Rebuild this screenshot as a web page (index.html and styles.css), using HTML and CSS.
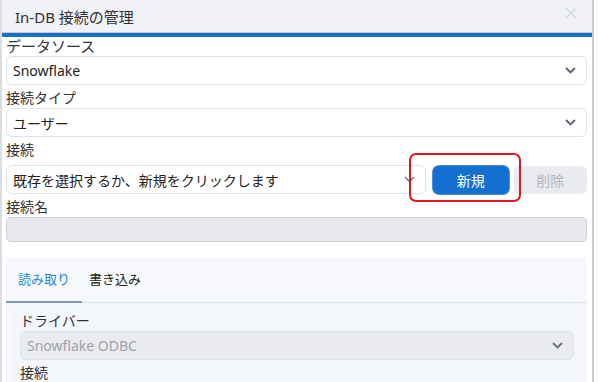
FILE: index.html
```html
<!DOCTYPE html>
<html lang="ja">
<head>
    <meta charset="UTF-8">
    <title>In-DB 接続の管理</title>
    <link rel="stylesheet" href="styles.css">
</head>
<body>
    <div class="dialog">
        <div class="titlebar">
            <span class="title">In-DB 接続の管理</span>
            <svg class="close" width="12" height="12" viewBox="0 0 12 12"><path d="M1 1L11 11M11 1L1 11" stroke="#d3d7e0" stroke-width="1.4" fill="none"/></svg>
        </div>
        <div class="accent"></div>
        <div class="body">
            <div class="field-label first">データソース</div>
            <div class="select">
                <span>Snowflake</span>
                <svg class="chev" width="11" height="7" viewBox="0 0 11 7"><path d="M1 1L5.5 5.5L10 1" stroke="#5c6374" stroke-width="1.8" fill="none"/></svg>
            </div>

            <div class="field-label">接続タイプ</div>
            <div class="select">
                <span>ユーザー</span>
                <svg class="chev" width="11" height="7" viewBox="0 0 11 7"><path d="M1 1L5.5 5.5L10 1" stroke="#5c6374" stroke-width="1.8" fill="none"/></svg>
            </div>

            <div class="field-label">接続</div>
            <div class="conn-row">
                <div class="select grow">
                    <span>既存を選択するか、新規をクリックします</span>
                    <svg class="chev" width="11" height="7" viewBox="0 0 11 7"><path d="M1 1L5.5 5.5L10 1" stroke="#7a8090" stroke-width="1.6" fill="none"/></svg>
                </div>
                <button class="btn primary">新規</button>
                <button class="btn muted">削除</button>
                <div class="highlight"></div>
            </div>

            <div class="field-label">接続名</div>
            <div class="text-input"></div>

            <div class="tabs">
                <div class="tab-bar">
                    <span class="tab active">読み取り</span>
                    <span class="tab">書き込み</span>
                </div>
                <div class="tab-panel">
                    <div class="field-label">ドライバー</div>
                    <div class="select disabled">
                        <span>Snowflake ODBC</span>
                        <svg class="chev" width="11" height="7" viewBox="0 0 11 7"><path d="M1 1L5.5 5.5L10 1" stroke="#6a7080" stroke-width="1.8" fill="none"/></svg>
                    </div>
                    <div class="field-label">接続</div>
                </div>
            </div>
        </div>
    </div>
</body>
</html>
```

FILE: styles.css
```css
body {
    margin: 0;
    padding: 0;
    background: #fff;
    font-family: "Noto Sans", "Noto Sans CJK JP", sans-serif;
    color: #222;
}
.dialog {
    width: 590px;
    height: 382px;
    border-left: 2px solid #dadde2;
    border-right: 2px solid #c8cbd1;
    overflow: hidden;
}
.titlebar {
    height: 32px;
    background-color: #f0f2f8;
    border-bottom: 1px solid #c7cad0;
    display: flex;
    align-items: center;
    justify-content: space-between;
    padding: 0 15px 0 13px;
}
.title {
    font-size: 15px;
    color: #333;
}
.close {
    margin-top: -6px;
}
.accent {
    height: 4px;
    background-color: #1771c8;
}
.body {
    padding: 0 5px 0 4px;
}
.field-label {
    font-size: 14px;
    line-height: 20px;
    height: 20px;
    margin-top: 3px;
    color: #333;
}
.field-label.first {
    font-size: 15px;
    margin-top: 0;
    height: 19px;
    line-height: 19px;
}
.select {
    height: 29px;
    box-sizing: border-box;
    border: 1px solid #dce2ee;
    border-radius: 6px;
    background: #fff;
    display: flex;
    align-items: center;
    justify-content: space-between;
    padding: 0 10px 0 6px;
    font-size: 14px;
    color: #222;
}
.select.disabled {
    background-color: #e9ebef;
    border-color: #dde2eb;
    color: #9fa2a8;
}
.conn-row {
    position: relative;
    display: flex;
    align-items: center;
    margin-top: 5px;
}
.conn-row .select {
    flex: none;
    width: 420px;
}
.btn {
    height: 28px;
    border: none;
    border-radius: 6px;
    font-family: inherit;
    font-size: 14px;
    padding: 0;
}
.btn.primary {
    width: 76px;
    margin-left: 7px;
    background-color: #1370d0;
    color: #fff;
    box-shadow: 0 0 0 1px #4c8fdb;
}
.btn.muted {
    width: 74px;
    margin-left: 5px;
    background-color: #e9ebef;
    color: #b2b5ba;
}
.highlight {
    position: absolute;
    left: 403px;
    top: -12px;
    width: 108px;
    height: 45px;
    border: 2px solid #e3161c;
    border-radius: 7px;
}
.text-input {
    height: 25px;
    box-sizing: border-box;
    border: 1px solid #cdd0d6;
    border-radius: 5px;
    background-color: #e8e9ed;
}
.tabs {
    margin-top: 15px;
    background-color: #f7f8fb;
}
.tab-bar {
    height: 45px;
    display: flex;
    align-items: stretch;
    border-bottom: 1px solid #dde3ee;
}
.tab {
    font-size: 13px;
    line-height: 45px;
    padding: 0 7px;
    color: #222;
}
.tab.active {
    color: #2b86d8;
    padding: 0 12px;
    border-bottom: 2px solid #7f95bd;
    margin-bottom: -1px;
    line-height: 44px;
}
.tab-panel {
    margin: 2px 5px 0 6px;
    background-color: #f3f6fb;
    padding: 3px 8px 10px 8px;
    height: 80px;
}
.tab-panel .select {
    margin-top: 0;
}
```
